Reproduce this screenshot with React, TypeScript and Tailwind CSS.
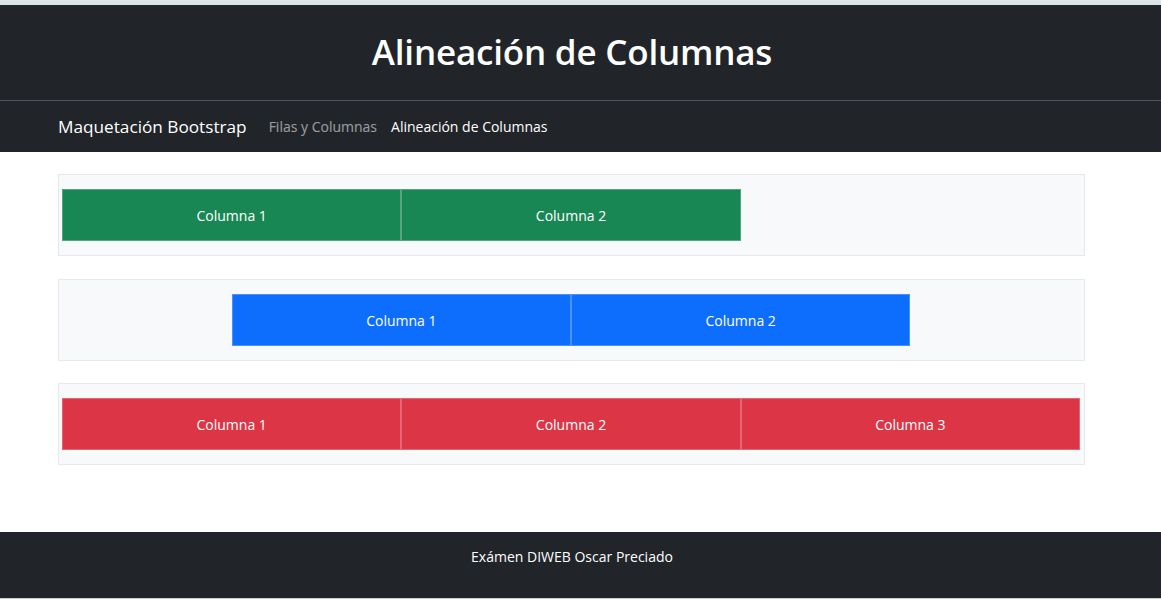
export default function App() {
  const font = { fontFamily: '"Open Sans", "Noto Sans", sans-serif' };
  return (
    <div className="w-[1161px] h-[609px] bg-white overflow-hidden" style={font}>
      <div className="h-[5px] bg-[#dce4e8]" />
      {/* header */}
      <header className="h-[95px] bg-[#212529]">
        <div className="w-[1144px] h-full flex items-center justify-center">
          <h1 className="text-white text-[35px] font-semibold tracking-[-0.2px]">Alineación de Columnas</h1>
        </div>
      </header>
      <div className="h-px bg-[#50565c]" />
      {/* navbar */}
      <nav className="h-[51px] bg-[#212529] flex items-center pl-[58px]">
        <span className="text-white text-[17.2px] mr-[22px]">Maquetación Bootstrap</span>
        <span className="text-white/55 text-[14px] mr-[14px]">Filas y Columnas</span>
        <span className="text-white text-[14px]">Alineación de Columnas</span>
      </nav>
      {/* content */}
      <main className="w-[1144px] h-[380px] pt-[22px] pl-[58px]">
        <Box>
          <div className="flex">
            <Col color="bg-[#198754]">Columna 1</Col>
            <Col color="bg-[#198754]">Columna 2</Col>
          </div>
        </Box>
        <Box>
          <div className="flex justify-center">
            <Col color="bg-[#0d6efd]">Columna 1</Col>
            <Col color="bg-[#0d6efd]">Columna 2</Col>
          </div>
        </Box>
        <Box>
          <div className="flex">
            <Col color="bg-[#dc3545]">Columna 1</Col>
            <Col color="bg-[#dc3545]">Columna 2</Col>
            <Col color="bg-[#dc3545]">Columna 3</Col>
          </div>
        </Box>
      </main>
      {/* footer */}
      <footer className="h-[66px] bg-[#212529]">
        <div className="w-[1144px] pt-[14px] text-center text-white text-[14px]">Exámen DIWEB Oscar Preciado</div>
      </footer>
      <div className="h-px bg-[#c8ccd0]" />
    </div>
  );
}

function Box({ children }: { children: React.ReactNode }) {
  return (
    <div className="w-[1027px] h-[82px] mb-[22.5px] border border-[#e6e8eb] bg-[#f8f9fa] pt-[14px] pl-[3px] pr-[4px]">
      {children}
    </div>
  );
}

function Col({ color, children }: { color: string; children: React.ReactNode }) {
  return (
    <div className={`${color} w-[339.33px] h-[52px] pt-px border border-white/25 flex items-center justify-center text-white text-[14px]`}>
      {children}
    </div>
  );
}
